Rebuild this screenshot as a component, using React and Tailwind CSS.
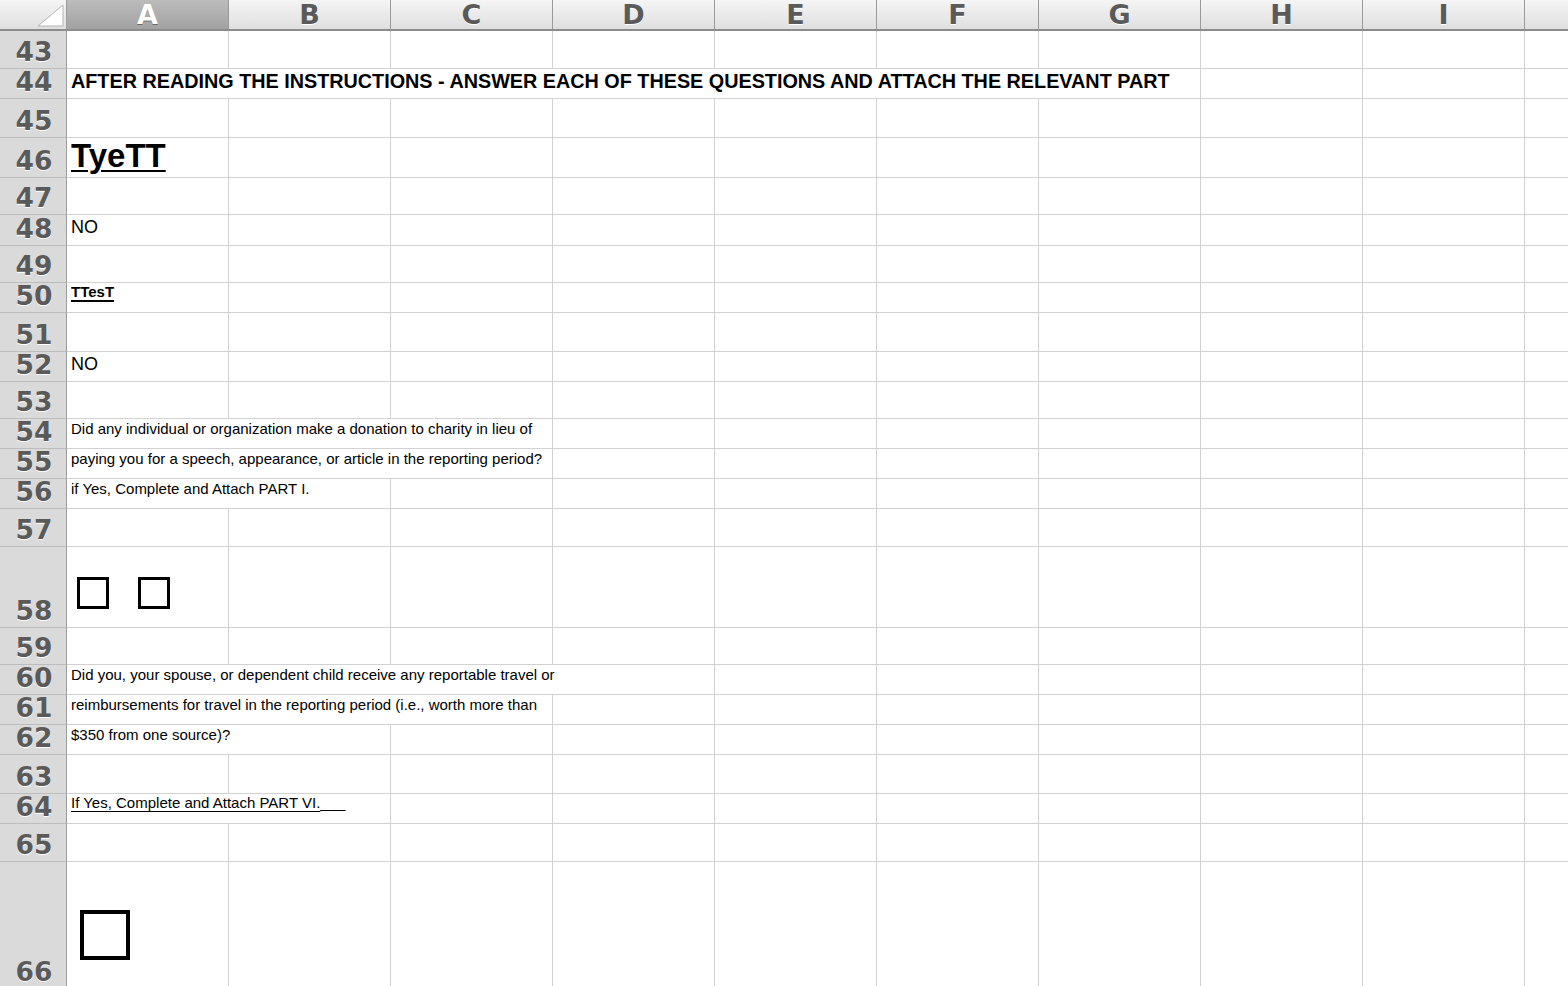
import React from "react";

const COLS = ["A", "B", "C", "D", "E", "F", "G", "H", "I", ""];

const SPAN = {
  1: "",
  2: "col-span-2",
  3: "col-span-3",
  4: "col-span-4",
  7: "col-span-7",
};

const Box = ({ className }) => <div className={`bg-white border-black ${className}`}></div>;

const Txt = ({ children }) => (
  <div className="pl-[4px] pt-[1px] text-[15px] leading-[17px]">{children}</div>
);

// spreadsheet rows 43..66: height in px (bottom gridline included), first-cell span and content
const rows = [
  { n: 43, h: "h-[38px]" },
  {
    n: 44,
    h: "h-[30px]",
    span: 7,
    body: (
      <div className="pl-[4px] pt-[1px] text-[19.8px] leading-[23px] font-bold">
        AFTER READING THE INSTRUCTIONS - ANSWER EACH OF THESE QUESTIONS AND ATTACH THE RELEVANT PART
      </div>
    ),
  },
  { n: 45, h: "h-[39px]" },
  {
    n: 46,
    h: "h-[40px]",
    body: (
      <div className="pl-[4px] text-[33px] leading-[35px] font-bold underline decoration-2 underline-offset-[3px]">
        TyeTT
      </div>
    ),
  },
  { n: 47, h: "h-[37px]" },
  { n: 48, h: "h-[31px]", body: <div className="pl-[4px] pt-[1.5px] text-[18px] leading-[21px]">NO</div> },
  { n: 49, h: "h-[37px]" },
  {
    n: 50,
    h: "h-[30px]",
    body: (
      <div className="pl-[4px] text-[15px] leading-[17px] font-bold underline decoration-[1.5px] underline-offset-[3px]">
        TTesT
      </div>
    ),
  },
  { n: 51, h: "h-[39px]" },
  { n: 52, h: "h-[30px]", body: <div className="pl-[4px] pt-[1.5px] text-[18px] leading-[21px]">NO</div> },
  { n: 53, h: "h-[37px]" },
  {
    n: 54,
    h: "h-[30px]",
    span: 3,
    body: <Txt>Did any individual or organization make a donation to charity in lieu of</Txt>,
  },
  {
    n: 55,
    h: "h-[30px]",
    span: 3,
    body: <Txt>paying you for a speech, appearance, or article in the reporting period?</Txt>,
  },
  { n: 56, h: "h-[30px]", span: 2, body: <Txt>if Yes, Complete and Attach PART I.</Txt> },
  { n: 57, h: "h-[38px]" },
  {
    n: 58,
    h: "h-[81px]",
    body: (
      <div className="flex gap-[29px] pl-[10px] pt-[30px]">
        <Box className="w-[32px] h-[32px] border-[3px]" />
        <Box className="w-[32px] h-[32px] border-[3px]" />
      </div>
    ),
  },
  { n: 59, h: "h-[37px]" },
  {
    n: 60,
    h: "h-[30px]",
    span: 4,
    body: <Txt>Did you, your spouse, or dependent child receive any reportable travel or</Txt>,
  },
  {
    n: 61,
    h: "h-[30px]",
    span: 3,
    body: <Txt>reimbursements for travel in the reporting period (i.e., worth more than</Txt>,
  },
  { n: 62, h: "h-[30px]", span: 2, body: <Txt>$350 from one source)?</Txt> },
  { n: 63, h: "h-[39px]" },
  {
    n: 64,
    h: "h-[30px]",
    span: 2,
    body: (
      <div className="pl-[4px] text-[15px] leading-[17px]">
        <span className="underline underline-offset-[3px]">If Yes, Complete and Attach PART VI.</span>___
      </div>
    ),
  },
  { n: 65, h: "h-[38px]" },
  {
    n: 66,
    h: "h-[127px]",
    body: (
      <div className="pl-[13px] pt-[48px]">
        <Box className="w-[50px] h-[50px] border-[4px]" />
      </div>
    ),
  },
];

const Corner = () => (
  <div className="relative h-full border-r border-[#9a9a9a] bg-gradient-to-b from-[#f5f5f5] to-[#dfdfdf]">
    <svg className="absolute left-[37px] top-[4px]" width="27" height="23" viewBox="0 0 27 23">
      <polygon points="26,1 26,22 1,22" fill="#ffffff" stroke="#b4b4b4" strokeWidth="1" />
    </svg>
  </div>
);

const ColHead = ({ label, selected, last }) => (
  <div
    className={`flex items-start justify-center pt-[1px] text-[27px] leading-[28px] font-bold ${
      last ? "" : "border-r border-[#9a9a9a]"
    } ${
      selected
        ? "bg-gradient-to-b from-[#bcbcbc] to-[#a2a2a2] text-white [text-shadow:0_1px_0_#6a6a6a]"
        : "bg-gradient-to-b from-[#f5f5f5] to-[#dfdfdf] text-[#5a5a5a] [text-shadow:0_1px_0_#ffffff]"
    }`}
  >
    {label}
  </div>
);

const Row = ({ row }) => {
  const span = row.span || 1;
  const rest = 10 - span;
  return (
    <div className={`grid grid-cols-[67px_repeat(9,162px)_1fr] ${row.h}`}>
      <div className="flex items-end justify-center pl-[2px] pb-[4px] bg-[#dadada] border-r border-[#9c9c9c] border-b border-b-[#bcbcbc]">
        <span className="font-['DejaVu_Sans',sans-serif] text-[26.5px] leading-[24px] font-bold text-[#5a5a5a] [text-shadow:0_1px_0_#ffffff]">
          {row.n}
        </span>
      </div>
      <div className={`${SPAN[span]} relative border-r border-b border-[#d2d2d2] whitespace-nowrap text-black`}>
        {row.body}
      </div>
      {Array.from({ length: rest }).map((_, i) => (
        <div
          key={i}
          className={`border-b border-[#d2d2d2] ${i === rest - 1 ? "" : "border-r"}`}
        ></div>
      ))}
    </div>
  );
};

const App = () => {
  return (
    <div className="w-[1568px] h-[986px] overflow-hidden bg-white font-['Liberation_Sans',Arial,sans-serif]">
      {/* column header */}
      <div className="grid grid-cols-[67px_repeat(9,162px)_1fr] h-[31px] border-b-2 border-[#8c8c8c] font-['DejaVu_Sans',sans-serif]">
        <Corner />
        {COLS.map((c, i) => (
          <ColHead key={i} label={c} selected={c === "A"} last={i === COLS.length - 1} />
        ))}
      </div>

      {/* rows */}
      {rows.map((r) => (
        <Row key={r.n} row={r} />
      ))}
    </div>
  );
};

export default App;
